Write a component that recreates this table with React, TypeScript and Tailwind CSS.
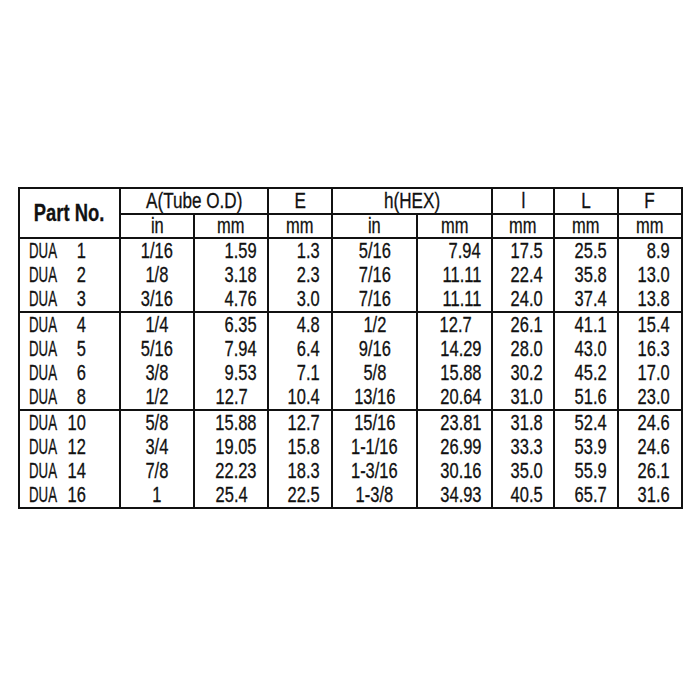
import React from "react";

type Row = [number, string, string, string, string, string, string, string, string];

const groups: Row[][] = [
  [
    [1, "1/16", "1.59", "1.3", "5/16", "7.94", "17.5", "25.5", "8.9"],
    [2, "1/8", "3.18", "2.3", "7/16", "11.11", "22.4", "35.8", "13.0"],
    [3, "3/16", "4.76", "3.0", "7/16", "11.11", "24.0", "37.4", "13.8"],
  ],
  [
    [4, "1/4", "6.35", "4.8", "1/2", "12.7", "26.1", "41.1", "15.4"],
    [5, "5/16", "7.94", "6.4", "9/16", "14.29", "28.0", "43.0", "16.3"],
    [6, "3/8", "9.53", "7.1", "5/8", "15.88", "30.2", "45.2", "17.0"],
    [8, "1/2", "12.7", "10.4", "13/16", "20.64", "31.0", "51.6", "23.0"],
  ],
  [
    [10, "5/8", "15.88", "12.7", "15/16", "23.81", "31.8", "52.4", "24.6"],
    [12, "3/4", "19.05", "15.8", "1-1/16", "26.99", "33.3", "53.9", "24.6"],
    [14, "7/8", "22.23", "18.3", "1-3/16", "30.16", "35.0", "55.9", "26.1"],
    [16, "1", "25.4", "22.5", "1-3/8", "34.93", "40.5", "65.7", "31.6"],
  ],
];

function C({ children }: { children: React.ReactNode }) {
  return <span className="inline-block origin-center scale-x-[0.77] whitespace-nowrap">{children}</span>;
}
function H({ children }: { children: React.ReactNode }) {
  return <span className="inline-block origin-center scale-x-[0.8] whitespace-nowrap">{children}</span>;
}
function R({ children }: { children: React.ReactNode }) {
  return <span className="inline-block origin-right scale-x-[0.77] whitespace-nowrap">{children}</span>;
}

const cellBase = "border-x-2 border-[#111] p-0";

function TwoDec({ v, top }: { v: string; top: boolean }) {
  const short = (v.split(".")[1] || "").length < 2;
  return (
    <td className={`${cellBase} text-right ${short ? "pr-[19px]" : "pr-[10px]"} ${top ? "border-t-2" : ""}`}>
      <R>{v}</R>
    </td>
  );
}

export default function App() {
  return (
    <div className="w-[700px] min-h-[700px] bg-white pt-[187px] pl-[18px]">
      <table className="table-fixed border-collapse border-2 border-[#111] w-[663px] text-[21.4px] leading-[24px] text-[#111] font-['Liberation_Sans',Arial,sans-serif] [-webkit-text-stroke:0.3px_#111]">
        <colgroup>
          <col className="w-[101px]" />
          <col className="w-[74px]" />
          <col className="w-[74px]" />
          <col className="w-[64px]" />
          <col className="w-[85px]" />
          <col className="w-[75px]" />
          <col className="w-[62px]" />
          <col className="w-[64px]" />
          <col className="w-[64px]" />
        </colgroup>
        <thead>
          <tr className="h-[26px]">
            <th rowSpan={2} className="border-2 border-[#111] p-0 text-center font-bold text-[23px]">
              <span className="inline-block origin-center scale-x-[0.8] whitespace-nowrap">Part No.</span>
            </th>
            <th colSpan={2} className="border-2 border-[#111] p-0 text-center font-normal">
              <H>A(Tube O.D)</H>
            </th>
            <th className="border-2 border-[#111] p-0 text-center font-normal">
              <H>E</H>
            </th>
            <th colSpan={2} className="border-2 border-[#111] p-0 text-center font-normal">
              <H>h(HEX)</H>
            </th>
            <th className="border-2 border-[#111] p-0 text-center font-normal">
              <H>l</H>
            </th>
            <th className="border-2 border-[#111] p-0 text-center font-normal">
              <H>L</H>
            </th>
            <th className="border-2 border-[#111] p-0 text-center font-normal">
              <H>F</H>
            </th>
          </tr>
          <tr className="h-[24px]">
            {["in", "mm", "mm", "in", "mm", "mm", "mm", "mm"].map((u, i) => (
              <th key={i} className="border-2 border-[#111] p-0 text-center font-normal leading-[20px]">
                <C>{u}</C>
              </th>
            ))}
          </tr>
        </thead>
        {groups.map((g, gi) => (
          <tbody key={gi}>
            {g.map((r, ri) => {
              const top = ri === 0;
              const t = top ? "border-t-2" : "";
              return (
                <tr key={ri} className="h-[24px]">
                  <td className={`${cellBase} ${t}`}>
                    <div className="ml-[9px] grid grid-cols-[28px_29px]">
                      <span className="inline-block origin-left scale-x-[0.62] whitespace-nowrap">DUA</span>
                      <span className="text-right whitespace-nowrap">
                        <R>{r[0]}</R>
                      </span>
                    </div>
                  </td>
                  <td className={`${cellBase} text-center ${t}`}>
                    <C>{r[1]}</C>
                  </td>
                  <TwoDec v={r[2]} top={top} />
                  <td className={`${cellBase} text-right pr-[11px] ${t}`}>
                    <R>{r[3]}</R>
                  </td>
                  <td className={`${cellBase} text-center ${t}`}>
                    <C>{r[4]}</C>
                  </td>
                  <TwoDec v={r[5]} top={top} />
                  <td className={`${cellBase} text-right pr-[10px] ${t}`}>
                    <R>{r[6]}</R>
                  </td>
                  <td className={`${cellBase} text-right pr-[10px] ${t}`}>
                    <R>{r[7]}</R>
                  </td>
                  <td className={`${cellBase} text-right pr-[11px] ${t}`}>
                    <R>{r[8]}</R>
                  </td>
                </tr>
              );
            })}
          </tbody>
        ))}
      </table>
    </div>
  );
}
